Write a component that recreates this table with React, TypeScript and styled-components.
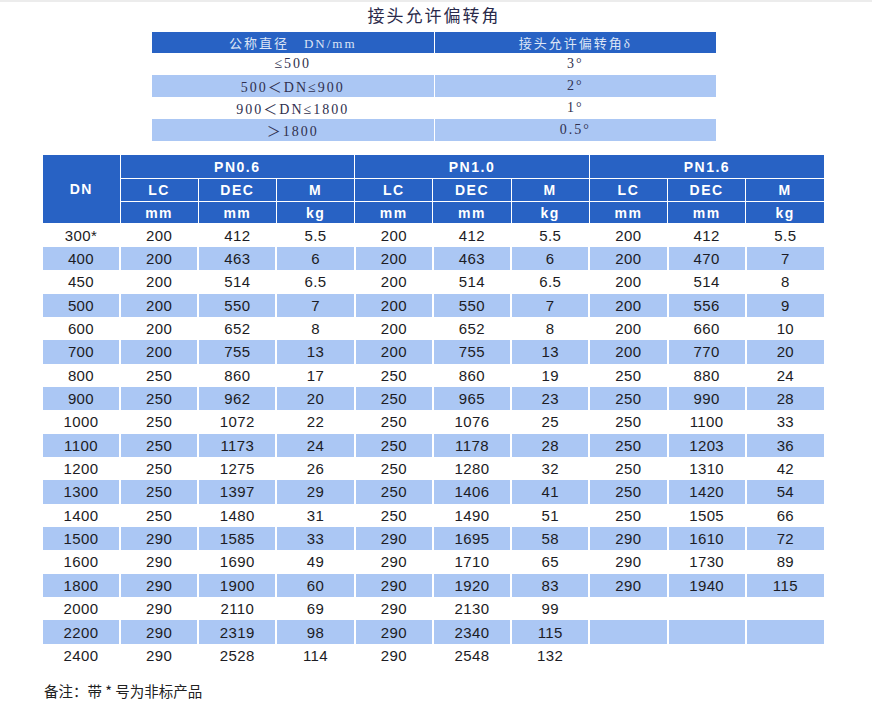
import React, { FC } from 'react'
import styled, { createGlobalStyle } from 'styled-components'

const GlobalStyle = createGlobalStyle`
  html, body {
    margin: 0;
    padding: 0;
    background: #fff;
  }
`

const Page = styled.div`
  width: 872px;
  height: 708px;
  box-sizing: border-box;
  border-top: 2px solid #ececec;
  display: flex;
  flex-direction: column;
  align-items: flex-start;
  overflow: hidden;
`

const Title = styled.h1`
  align-self: center;
  margin: 0 0 0 -4px;
  height: 30px;
  line-height: 26px;
  font-family: 'Noto Sans CJK SC', sans-serif;
  font-size: 17px;
  font-weight: 400;
  letter-spacing: 2px;
  color: #2a2a4a;
  text-align: center;
`

const AngleTable = styled.table`
  width: 564px;
  margin-left: 152px;
  border-collapse: collapse;
  table-layout: fixed;
  font-family: 'Liberation Serif', 'Noto Sans CJK SC', serif;
`

const AngleHead = styled.th`
  height: 21px;
  padding: 0;
  background: #2862c4;
  color: #dce5f6;
  font-size: 13px;
  font-weight: 400;
  letter-spacing: 2px;
  border-right: 1px solid #ffffff;
  &:last-child {
    border-right: none;
  }
`

const AngleCell = styled.td<{ $shade: boolean }>`
  height: 22px;
  padding: 0;
  text-align: center;
  background: ${p => (p.$shade ? '#abc7f4' : '#ffffff')};
  color: #30304e;
  font-size: 14px;
  letter-spacing: 2px;
  border-right: 1px solid #ffffff;
  &:last-child {
    border-right: none;
  }
`

const SpecTable = styled.table`
  width: 781px;
  margin: 14px 0 0 43px;
  border-collapse: collapse;
  table-layout: fixed;
  font-family: 'Liberation Sans', Arial, sans-serif;
`

const HeadCell = styled.th<{ $h: number }>`
  height: ${p => p.$h}px;
  padding: 0;
  background: #2862c4;
  color: #ffffff;
  font-size: 14px;
  font-weight: 700;
  letter-spacing: 1.5px;
  text-align: center;
  border: 1px solid #ffffff;
  border-top: none;
  &:first-child {
    border-left: none;
  }
  &:last-child {
    border-right: none;
  }
`

const DataCell = styled.td<{ $shade: boolean }>`
  height: 23.35px;
  padding: 0;
  box-sizing: border-box;
  text-align: center;
  background: ${p => (p.$shade ? '#abc7f4' : '#ffffff')};
  color: #1c1c24;
  font-size: 15px;
  letter-spacing: 0.4px;
  border-right: 2px solid #ffffff;
  &:last-child {
    border-right: none;
  }
`

const Note = styled.p`
  margin: 13px 0 0 44px;
  font-family: 'Noto Sans CJK SC', sans-serif;
  font-size: 14.5px;
  color: #222;
`

const angleRows: [string, string][] = [
  ['≤500', '3°'],
  ['500＜DN≤900', '2°'],
  ['900＜DN≤1800', '1°'],
  ['＞1800', '0.5°'],
]

const rows: string[][] = [
  ['300*', '200', '412', '5.5', '200', '412', '5.5', '200', '412', '5.5'],
  ['400', '200', '463', '6', '200', '463', '6', '200', '470', '7'],
  ['450', '200', '514', '6.5', '200', '514', '6.5', '200', '514', '8'],
  ['500', '200', '550', '7', '200', '550', '7', '200', '556', '9'],
  ['600', '200', '652', '8', '200', '652', '8', '200', '660', '10'],
  ['700', '200', '755', '13', '200', '755', '13', '200', '770', '20'],
  ['800', '250', '860', '17', '250', '860', '19', '250', '880', '24'],
  ['900', '250', '962', '20', '250', '965', '23', '250', '990', '28'],
  ['1000', '250', '1072', '22', '250', '1076', '25', '250', '1100', '33'],
  ['1100', '250', '1173', '24', '250', '1178', '28', '250', '1203', '36'],
  ['1200', '250', '1275', '26', '250', '1280', '32', '250', '1310', '42'],
  ['1300', '250', '1397', '29', '250', '1406', '41', '250', '1420', '54'],
  ['1400', '250', '1480', '31', '250', '1490', '51', '250', '1505', '66'],
  ['1500', '290', '1585', '33', '290', '1695', '58', '290', '1610', '72'],
  ['1600', '290', '1690', '49', '290', '1710', '65', '290', '1730', '89'],
  ['1800', '290', '1900', '60', '290', '1920', '83', '290', '1940', '115'],
  ['2000', '290', '2110', '69', '290', '2130', '99', '', '', ''],
  ['2200', '290', '2319', '98', '290', '2340', '115', '', '', ''],
  ['2400', '290', '2528', '114', '290', '2548', '132', '', '', ''],
]

const grades = ['PN0.6', 'PN1.0', 'PN1.6']

const App: FC = () => (
  <Page>
    <GlobalStyle />
    <Title>接头允许偏转角</Title>
    <AngleTable>
      <colgroup>
        <col style={{ width: 282 }} />
        <col />
      </colgroup>
      <thead>
        <tr>
          <AngleHead>公称直径　DN/mm</AngleHead>
          <AngleHead>接头允许偏转角δ</AngleHead>
        </tr>
      </thead>
      <tbody>
        {angleRows.map(([dn, deg], i) => (
          <tr key={dn}>
            <AngleCell $shade={i % 2 === 1}>{dn}</AngleCell>
            <AngleCell $shade={i % 2 === 1}>{deg}</AngleCell>
          </tr>
        ))}
      </tbody>
    </AngleTable>

    <SpecTable>
      <colgroup>
        <col style={{ width: 77 }} />
        {Array.from({ length: 9 }).map((_, i) => (
          <col key={i} />
        ))}
      </colgroup>
      <thead>
        <tr>
          <HeadCell $h={23} rowSpan={3}>
            DN
          </HeadCell>
          {grades.map(g => (
            <HeadCell $h={23} key={g} colSpan={3}>
              {g}
            </HeadCell>
          ))}
        </tr>
        <tr>
          {grades.map(g => (
            <React.Fragment key={g}>
              <HeadCell $h={22}>LC</HeadCell>
              <HeadCell $h={22}>DEC</HeadCell>
              <HeadCell $h={22}>M</HeadCell>
            </React.Fragment>
          ))}
        </tr>
        <tr>
          {grades.map(g => (
            <React.Fragment key={g}>
              <HeadCell $h={21}>mm</HeadCell>
              <HeadCell $h={21}>mm</HeadCell>
              <HeadCell $h={21}>kg</HeadCell>
            </React.Fragment>
          ))}
        </tr>
      </thead>
      <tbody>
        {rows.map((r, i) => (
          <tr key={r[0]}>
            {r.map((v, j) => (
              <DataCell key={j} $shade={i % 2 === 1}>
                {v}
              </DataCell>
            ))}
          </tr>
        ))}
      </tbody>
    </SpecTable>

    <Note>备注：带 * 号为非标产品</Note>
  </Page>
)

export default App
